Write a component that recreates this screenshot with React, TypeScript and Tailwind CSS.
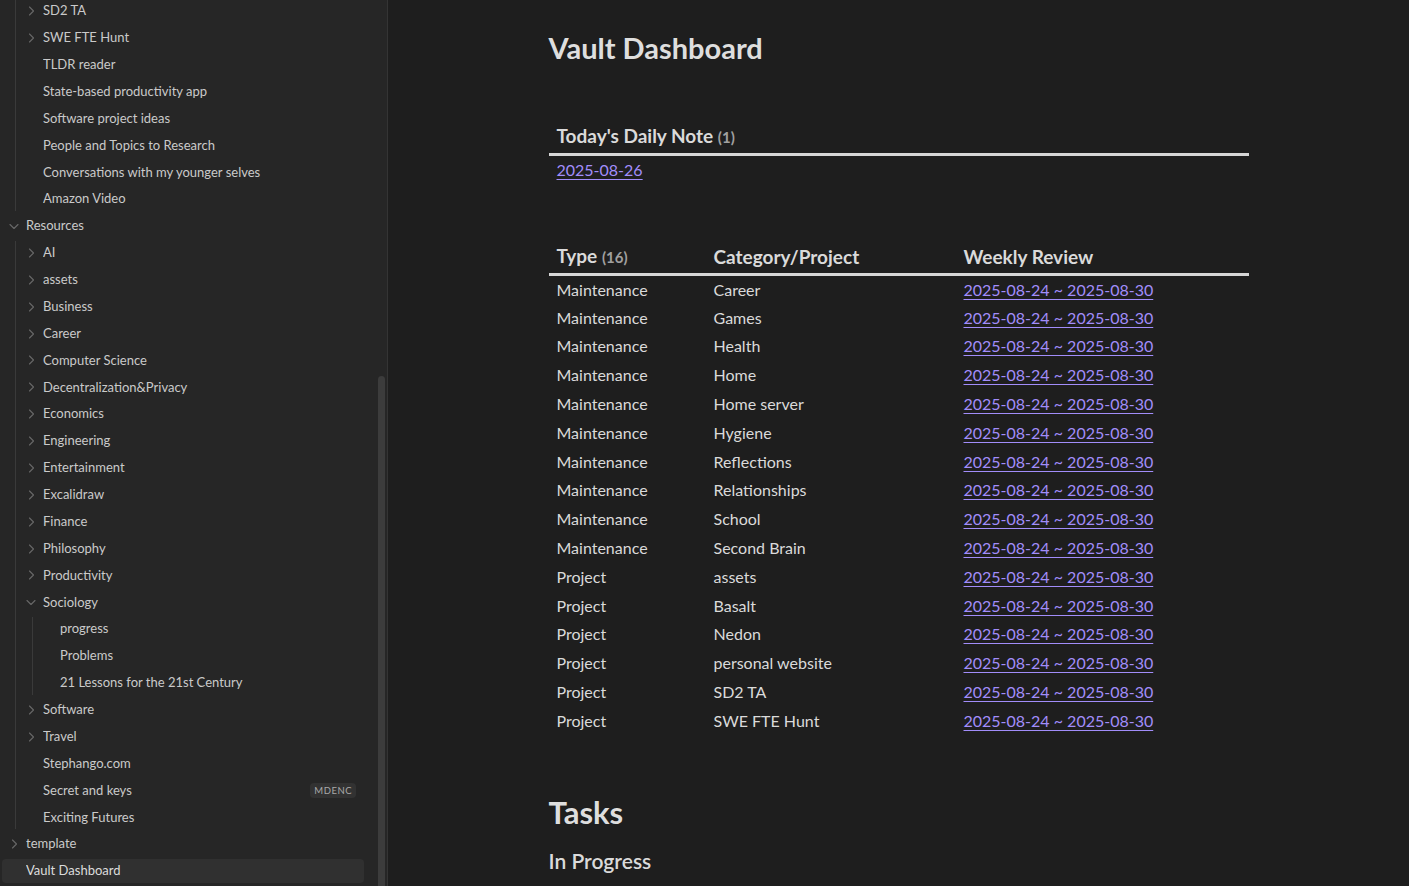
import React from 'react';

type Item = {
  label: string;
  chevron?: 'right' | 'down';
  badge?: string;
  active?: boolean;
  children?: Item[];
};

const projectsTail: Item[] = [
  { label: 'SD2 TA', chevron: 'right' },
  { label: 'SWE FTE Hunt', chevron: 'right' },
  { label: 'TLDR reader' },
  { label: 'State-based productivity app' },
  { label: 'Software project ideas' },
  { label: 'People and Topics to Research' },
  { label: 'Conversations with my younger selves' },
  { label: 'Amazon Video' },
];

const resources: Item[] = [
  { label: 'AI', chevron: 'right' },
  { label: 'assets', chevron: 'right' },
  { label: 'Business', chevron: 'right' },
  { label: 'Career', chevron: 'right' },
  { label: 'Computer Science', chevron: 'right' },
  { label: 'Decentralization&Privacy', chevron: 'right' },
  { label: 'Economics', chevron: 'right' },
  { label: 'Engineering', chevron: 'right' },
  { label: 'Entertainment', chevron: 'right' },
  { label: 'Excalidraw', chevron: 'right' },
  { label: 'Finance', chevron: 'right' },
  { label: 'Philosophy', chevron: 'right' },
  { label: 'Productivity', chevron: 'right' },
  {
    label: 'Sociology',
    chevron: 'down',
    children: [{ label: 'progress' }, { label: 'Problems' }, { label: '21 Lessons for the 21st Century' }],
  },
  { label: 'Software', chevron: 'right' },
  { label: 'Travel', chevron: 'right' },
  { label: 'Stephango.com' },
  { label: 'Secret and keys', badge: 'MDENC' },
  { label: 'Exciting Futures' },
];

const rows: [string, string][] = [
  ['Maintenance', 'Career'],
  ['Maintenance', 'Games'],
  ['Maintenance', 'Health'],
  ['Maintenance', 'Home'],
  ['Maintenance', 'Home server'],
  ['Maintenance', 'Hygiene'],
  ['Maintenance', 'Reflections'],
  ['Maintenance', 'Relationships'],
  ['Maintenance', 'School'],
  ['Maintenance', 'Second Brain'],
  ['Project', 'assets'],
  ['Project', 'Basalt'],
  ['Project', 'Nedon'],
  ['Project', 'personal website'],
  ['Project', 'SD2 TA'],
  ['Project', 'SWE FTE Hunt'],
];

function Chevron({ dir }: { dir: 'right' | 'down' }) {
  return (
    <svg width="12" height="12" viewBox="0 0 24 24" fill="none" stroke="#686868" strokeWidth="2.2" strokeLinecap="round" strokeLinejoin="round">
      {dir === 'right' ? <path d="M9 4l8 8-8 8" /> : <path d="M4 9l8 8 8-8" />}
    </svg>
  );
}

function Row({ item, top }: { item: Item; top?: boolean }) {
  return (
    <div
      className={
        'flex items-center h-[24px] mb-[2.875px] rounded-[4px] pr-[8px] text-[13px] ' +
        (top ? 'pl-[6px] ' : 'pl-[9px] ') +
        (item.active ? 'bg-[#303030] text-[#dcdcdc]' : 'text-[#cacaca]')
      }
    >
      <div className="w-[18px] flex items-center shrink-0">
        {item.chevron && <Chevron dir={item.chevron} />}
      </div>
      <span className="flex-1 truncate">{item.label}</span>
      {item.badge && (
        <span className="text-[9.5px] leading-none tracking-[0.5px] text-[#a9a9a9] bg-[#323232] rounded-[4px] px-[4px] py-[3px]">
          {item.badge}
        </span>
      )}
    </div>
  );
}

function Group({ items }: { items: Item[] }) {
  return (
    <div className="ml-[13px] border-l border-[#3a3a3a]">
      {items.map((it) => (
        <React.Fragment key={it.label}>
          <Row item={it} />
          {it.children && (
            <div className="ml-[16px] border-l border-[#3a3a3a]">
              {it.children.map((c) => (
                <Row key={c.label} item={c} />
              ))}
            </div>
          )}
        </React.Fragment>
      ))}
    </div>
  );
}

function Sidebar() {
  return (
    <aside className="relative w-[388px] shrink-0 h-full bg-[#262626] border-r border-[#343434] overflow-hidden">
      <div className="pl-[2px] pr-[23px] -mt-[1px]">
        <Group items={projectsTail} />
        <Row top item={{ label: 'Resources', chevron: 'down' }} />
        <Group items={resources} />
        <Row top item={{ label: 'template', chevron: 'right' }} />
        <Row top item={{ label: 'Vault Dashboard', active: true }} />
      </div>
      {/* scrollbar thumb */}
      <div className="absolute left-[378px] top-[376px] w-[7px] h-[520px] rounded-[4px] bg-[#3c3c3c]" />
    </aside>
  );
}

function Link({ children }: { children: React.ReactNode }) {
  return <span className="text-[#a28dfa] underline underline-offset-[3px] decoration-1">{children}</span>;
}

export default function App() {
  return (
    <div className="flex w-[1409px] h-[886px] overflow-hidden bg-[#1e1e1e] font-['Lato',sans-serif]">
      <Sidebar />
      <main className="flex-1 overflow-hidden">
        <div className="w-[700px] mx-auto pt-[29px] text-[#dadada]">
          <h1 className="text-[29px] leading-[38px] font-bold text-[#dedede]">Vault Dashboard</h1>

          {/* Today's Daily Note */}
          <table className="w-full mt-[56px] border-collapse">
            <thead>
              <tr className="border-b-[3px] border-[#d6d6d6]">
                <th className="text-left pl-[8px] pb-[3px] text-[19px] leading-[26px] font-bold">
                  Today's Daily Note <span className="text-[15px] font-bold text-[#a0a0a0]">(1)</span>
                </th>
              </tr>
            </thead>
            <tbody>
              <tr>
                <td className="pl-[8px] pt-[1px] text-[16px] leading-[26px]">
                  <Link>2025-08-26</Link>
                </td>
              </tr>
            </tbody>
          </table>

          {/* Weekly reviews */}
          <table className="w-full mt-[60px] border-collapse table-fixed">
            <thead>
              <tr className="border-b-[3px] border-[#d6d6d6]">
                <th className="w-[157px] text-left pl-[8px] pb-[3px] text-[19px] leading-[26px] font-bold">
                  Type <span className="text-[15px] font-bold text-[#a0a0a0]">(16)</span>
                </th>
                <th className="w-[250px] text-left pl-[8px] pb-[3px] text-[19px] leading-[26px] font-bold">Category/Project</th>
                <th className="text-left pl-[8px] pb-[3px] text-[19px] leading-[26px] font-bold">Weekly Review</th>
              </tr>
            </thead>
            <tbody>
              {rows.map(([type, cat], i) => (
                <tr key={i} className="h-[28.8px] text-[16px]">
                  <td className="pl-[8px]">{type}</td>
                  <td className="pl-[8px]">{cat}</td>
                  <td className="pl-[8px]">
                    <Link>2025-08-24 ~ 2025-08-30</Link>
                  </td>
                </tr>
              ))}
            </tbody>
          </table>

          <h1 className="mt-[57px] text-[31px] leading-[40px] font-bold text-[#dedede]">Tasks</h1>
          <h3 className="mt-[15px] text-[21px] leading-[28px] font-semibold text-[#dadada]">In Progress</h3>
        </div>
      </main>
    </div>
  );
}
